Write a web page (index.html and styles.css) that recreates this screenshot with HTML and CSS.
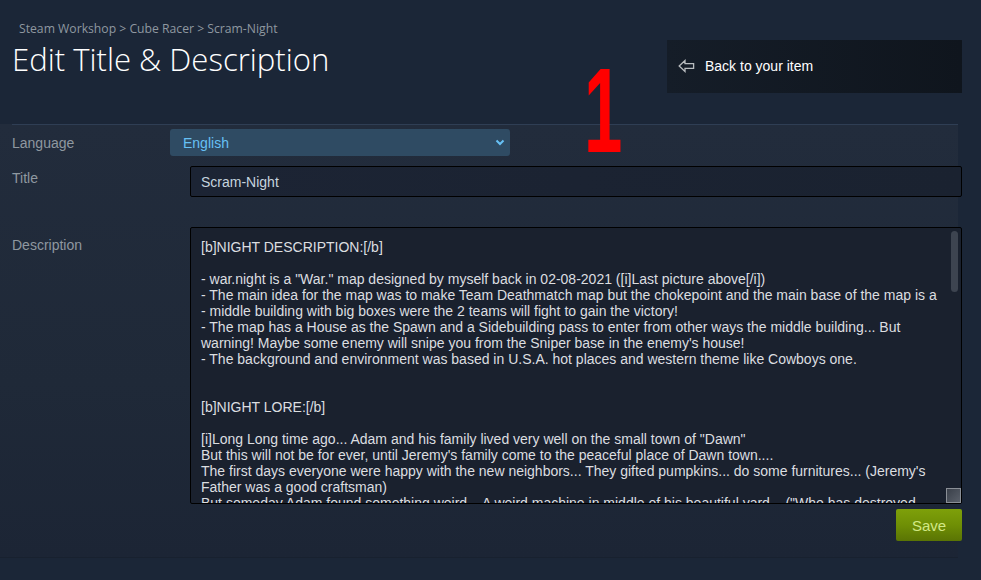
FILE: index.html
```html
<!DOCTYPE html>
<html lang="en">
<head>
    <meta charset="UTF-8">
    <meta name="viewport" content="width=device-width, initial-scale=1.0">
    <title>Edit Title &amp; Description</title>
    <link rel="stylesheet" href="styles.css">
</head>
<body>
    <div class="page">
        <div class="header">
            <div class="heading">
                <div class="breadcrumbs">Steam Workshop &gt; Cube Racer &gt; Scram-Night</div>
                <h1>Edit Title &amp; Description</h1>
            </div>
            <a class="back-btn" href="#">
                <svg class="back-icon" width="17" height="14" viewBox="0 0 17 14">
                    <path d="M1.2 7 L7 1.6 L7 4.6 L15.6 4.6 L15.6 9.4 L7 9.4 L7 12.4 Z" fill="none" stroke="#b8bcbf" stroke-width="1.3" stroke-linejoin="miter"/>
                </svg>
                <span>Back to your item</span>
            </a>
        </div>

        <span class="marker">1</span>

        <form class="panel">
            <div class="row row-language">
                <label class="label label-select" for="language">Language</label>
                <div class="select-wrap">
                    <select id="language" class="select">
                        <option>English</option>
                    </select>
                    <svg class="chevron" width="10" height="7" viewBox="0 0 10 7">
                        <path d="M1.5 1.5 L5 5 L8.5 1.5" fill="none" stroke="#67c1f5" stroke-width="2"/>
                    </svg>
                </div>
            </div>

            <div class="row row-title">
                <label class="label" for="title">Title</label>
                <input type="text" id="title" class="text-input" value="Scram-Night">
            </div>

            <div class="row row-description">
                <label class="label" for="description">Description</label>
                <div class="textarea-wrap">
                    <textarea id="description" class="text-area">[b]NIGHT DESCRIPTION:[/b]

- war.night is a "War." map designed by myself back in 02-08-2021 ([i]Last picture above[/i])
- The main idea for the map was to make Team Deathmatch map but the chokepoint and the main base of the map is a
- middle building with big boxes were the 2 teams will fight to gain the victory!
- The map has a House as the Spawn and a Sidebuilding pass to enter from other ways the middle building... But warning! Maybe some enemy will snipe you from the Sniper base in the enemy's house!
- The background and environment was based in U.S.A. hot places and western theme like Cowboys one.


[b]NIGHT LORE:[/b]

[i]Long Long time ago... Adam and his family lived very well on the small town of "Dawn"
But this will not be for ever, until Jeremy's family come to the peaceful place of Dawn town....
The first days everyone were happy with the new neighbors... They gifted pumpkins... do some furnitures... (Jeremy's Father was a good craftsman)
But someday Adam found something weird... A weird machine in middle of his beautiful yard... ("Who has destroyed
my flowers?!")
Adam went to Jeremy's house to ask about the machine... but nobody was there...
The night came and the machine started to work...[/i]</textarea>
                    <div class="scroll-thumb"></div>
                </div>
            </div>

            <div class="actions">
                <button type="button" class="save-btn">Save</button>
            </div>
        </form>
    </div>
</body>
</html>
```

FILE: styles.css
```css
body {
    margin: 0;
    background-color: #1b2637;
    font-family: "Liberation Sans", Arial, sans-serif;
    overflow: hidden;
}
.page {
    position: relative;
    height: 580px;
}
.header {
    display: flex;
    justify-content: space-between;
    padding: 0 19px 0 12px;
    height: 124px;
}
.breadcrumbs {
    margin: 20px 0 0 7px;
    font-family: "Open Sans", "Noto Sans", sans-serif;
    font-size: 12.2px;
    line-height: 17px;
    color: #8f98a0;
}
h1 {
    margin: 1px 0 0;
    font-family: "Open Sans", "Noto Sans", sans-serif;
    font-weight: 300;
    font-size: 31.1px;
    line-height: 42px;
    color: #ffffff;
}
.back-btn {
    display: flex;
    align-items: center;
    gap: 10px;
    box-sizing: border-box;
    width: 295px;
    height: 53px;
    margin-top: 40px;
    padding: 0 0 1px 11px;
    background: linear-gradient(to right, #151d28 0%, #0f151d 100%);
    color: #ffffff;
    font-size: 14px;
    text-decoration: none;
}
.back-icon {
    display: block;
}
.marker {
    position: absolute;
    left: 584px;
    top: 44px;
    font-family: "Liberation Sans", Arial, sans-serif;
    font-weight: bold;
    font-size: 121px;
    line-height: 132px;
    color: #ff0000;
    transform: scaleX(0.57);
    transform-origin: left top;
}
.panel {
    box-sizing: border-box;
    width: 958px;
    height: 433px;
    padding: 0 0 0 12px;
    background: linear-gradient(to bottom, #222c3c 0%, #1f2938 60%, #1c2535 100%);
    box-shadow: 0 1px 0 #18212f;
}
.row {
    display: flex;
    align-items: flex-start;
}
.row-language {
    border-top: 1px solid #2f3e54;
    padding-top: 4px;
    align-items: center;
}
.label {
    width: 178px;
    flex-shrink: 0;
    font-size: 14px;
    line-height: 18px;
    color: #8f98a0;
}
.label-select {
    width: 158px;
}
.select-wrap {
    position: relative;
    width: 340px;
}
.select {
    display: block;
    width: 100%;
    height: 27px;
    padding: 0 0 0 13px;
    border: none;
    border-radius: 3px;
    background-color: #2f4b63;
    color: #67c1f5;
    font-family: "Liberation Sans", Arial, sans-serif;
    font-size: 14px;
    appearance: none;
    -webkit-appearance: none;
    outline: none;
}
.chevron {
    position: absolute;
    right: 5px;
    top: 10px;
}
.row-title {
    margin-top: 10px;
}
.row-title .label {
    margin-top: 3px;
}
.text-input {
    box-sizing: border-box;
    flex-shrink: 0;
    width: 772px;
    height: 31px;
    margin: 0;
    padding: 0 10px;
    border: 1px solid #000000;
    border-radius: 2px;
    background: linear-gradient(to right, #1c2434 0%, #1a2230 100%);
    color: #c6d4df;
    font-family: "Liberation Sans", Arial, sans-serif;
    font-size: 14px;
    outline: none;
}
.row-description {
    margin-top: 30px;
}
.row-description .label {
    margin-top: 9px;
}
.textarea-wrap {
    position: relative;
    flex-shrink: 0;
    width: 772px;
    height: 277px;
}
.text-area {
    display: block;
    box-sizing: border-box;
    width: 772px;
    height: 277px;
    margin: 0;
    padding: 11px 18px 0 10px;
    border: 1px solid #000000;
    border-radius: 2px;
    background: #1a212e;
    color: #dcdee0;
    font-family: "Liberation Sans", Arial, sans-serif;
    font-size: 14px;
    line-height: 16px;
    overflow: hidden;
    resize: both;
    outline: none;
}
.text-area::-webkit-resizer {
    background: linear-gradient(135deg, #3a404a 0%, #5a606a 100%);
    border: 1px solid #8a8f96;
}
.scroll-thumb {
    position: absolute;
    right: 4px;
    top: 4px;
    width: 7px;
    height: 61px;
    border-radius: 4px;
    background-color: #3d4450;
}
.actions {
    display: flex;
    justify-content: flex-end;
    margin-right: -4px;
    margin-top: 5px;
}
.save-btn {
    width: 66px;
    height: 32px;
    border: none;
    border-radius: 2px;
    background: linear-gradient(to bottom, #7ea00a 0%, #6f8f05 50%, #5a7404 100%);
    color: #d2e885;
    font-family: "Liberation Sans", Arial, sans-serif;
    font-size: 15px;
    cursor: pointer;
}
```
